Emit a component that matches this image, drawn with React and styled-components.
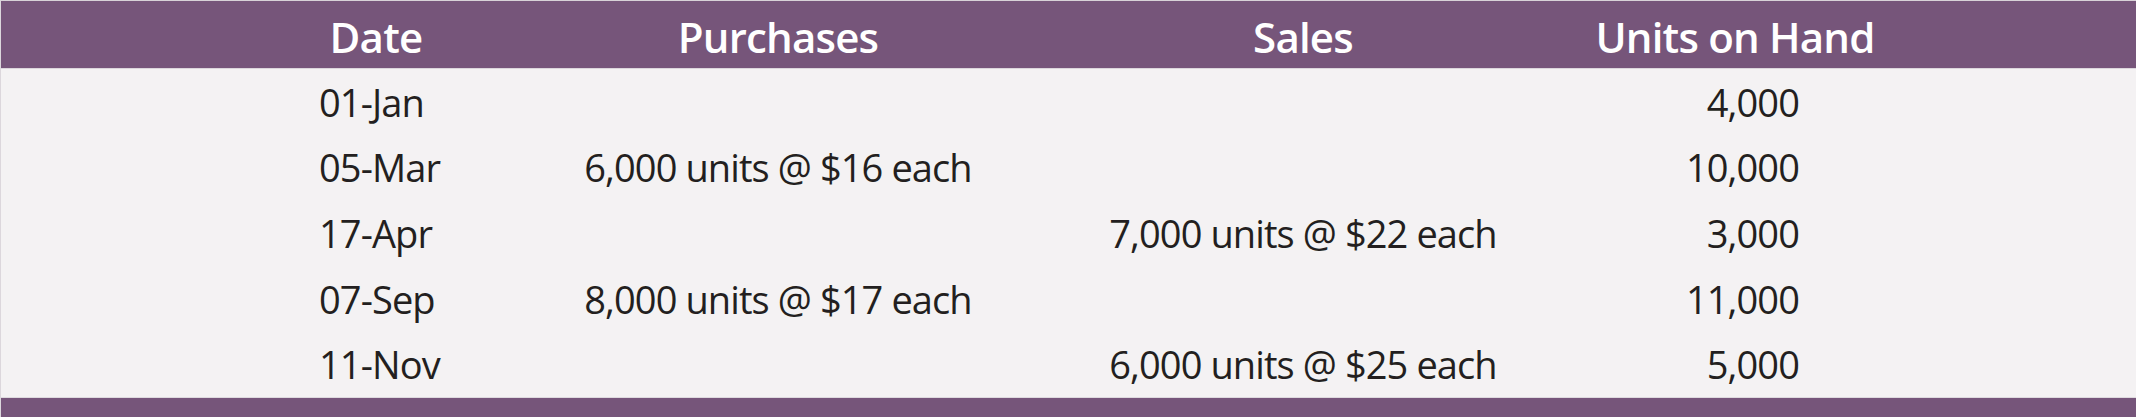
import React from "react";
import styled, { createGlobalStyle } from "styled-components";

const GlobalStyle = createGlobalStyle`
  html, body {
    margin: 0;
    padding: 0;
    background: #f4f2f3;
  }
  body {
    font-family: "Open Sans", "Noto Sans", "DejaVu Sans", sans-serif;
  }
`;

const PURPLE = "#76557a";
const COLUMNS = "268px 536px 514px 350px";

const Page = styled.div`
  width: 2136px;
  height: 417px;
  box-sizing: border-box;
  border-top: 1px solid #d8d2d8;
  border-left: 1px solid #dcd7dc;
  background: #f4f2f3;
  display: flex;
  flex-direction: column;
  overflow: hidden;
`;

const HeaderBar = styled.div`
  height: 67px;
  flex: none;
  background: ${PURPLE};
  border-bottom: 1px solid #dcd6dc;
  display: grid;
  grid-template-columns: ${COLUMNS};
  padding-left: 241px;
  align-items: center;
`;

const HeaderCell = styled.div`
  text-align: center;
  color: #ffffff;
  font-size: 42px;
  font-weight: 600;
  letter-spacing: -0.8px;
  white-space: nowrap;
  padding-top: 3px;
`;

const Body = styled.div`
  height: 328px;
  flex: none;
  display: grid;
  grid-template-rows: repeat(5, 1fr);
  border-bottom: 1px solid #dedade;
`;

const Row = styled.div`
  display: grid;
  grid-template-columns: ${COLUMNS};
  padding-left: 241px;
  align-items: center;
`;

const Cell = styled.div`
  color: #231f20;
  font-size: 38px;
  font-weight: 400;
  letter-spacing: -0.9px;
  white-space: nowrap;
  text-align: ${(p) => p.$align || "center"};
  padding-left: ${(p) => (p.$align === "left" ? "77px" : "0")};
  padding-right: ${(p) => (p.$align === "right" ? "111px" : "0")};
`;

const FooterBar = styled.div`
  flex: 1;
  background: ${PURPLE};
`;

const rows = [
  { date: "01-Jan", purchase: "", sale: "", units: "4,000" },
  { date: "05-Mar", purchase: "6,000 units @ $16 each", sale: "", units: "10,000" },
  { date: "17-Apr", purchase: "", sale: "7,000 units @ $22 each", units: "3,000" },
  { date: "07-Sep", purchase: "8,000 units @ $17 each", sale: "", units: "11,000" },
  { date: "11-Nov", purchase: "", sale: "6,000 units @ $25 each", units: "5,000" },
];

export default function App() {
  return (
    <>
      <GlobalStyle />
      <Page>
        <HeaderBar>
          <HeaderCell>Date</HeaderCell>
          <HeaderCell>Purchases</HeaderCell>
          <HeaderCell>Sales</HeaderCell>
          <HeaderCell>Units on Hand</HeaderCell>
        </HeaderBar>
        <Body>
          {rows.map((r) => (
            <Row key={r.date}>
              <Cell $align="left">{r.date}</Cell>
              <Cell>{r.purchase}</Cell>
              <Cell>{r.sale}</Cell>
              <Cell $align="right">{r.units}</Cell>
            </Row>
          ))}
        </Body>
        <FooterBar />
      </Page>
    </>
  );
}
